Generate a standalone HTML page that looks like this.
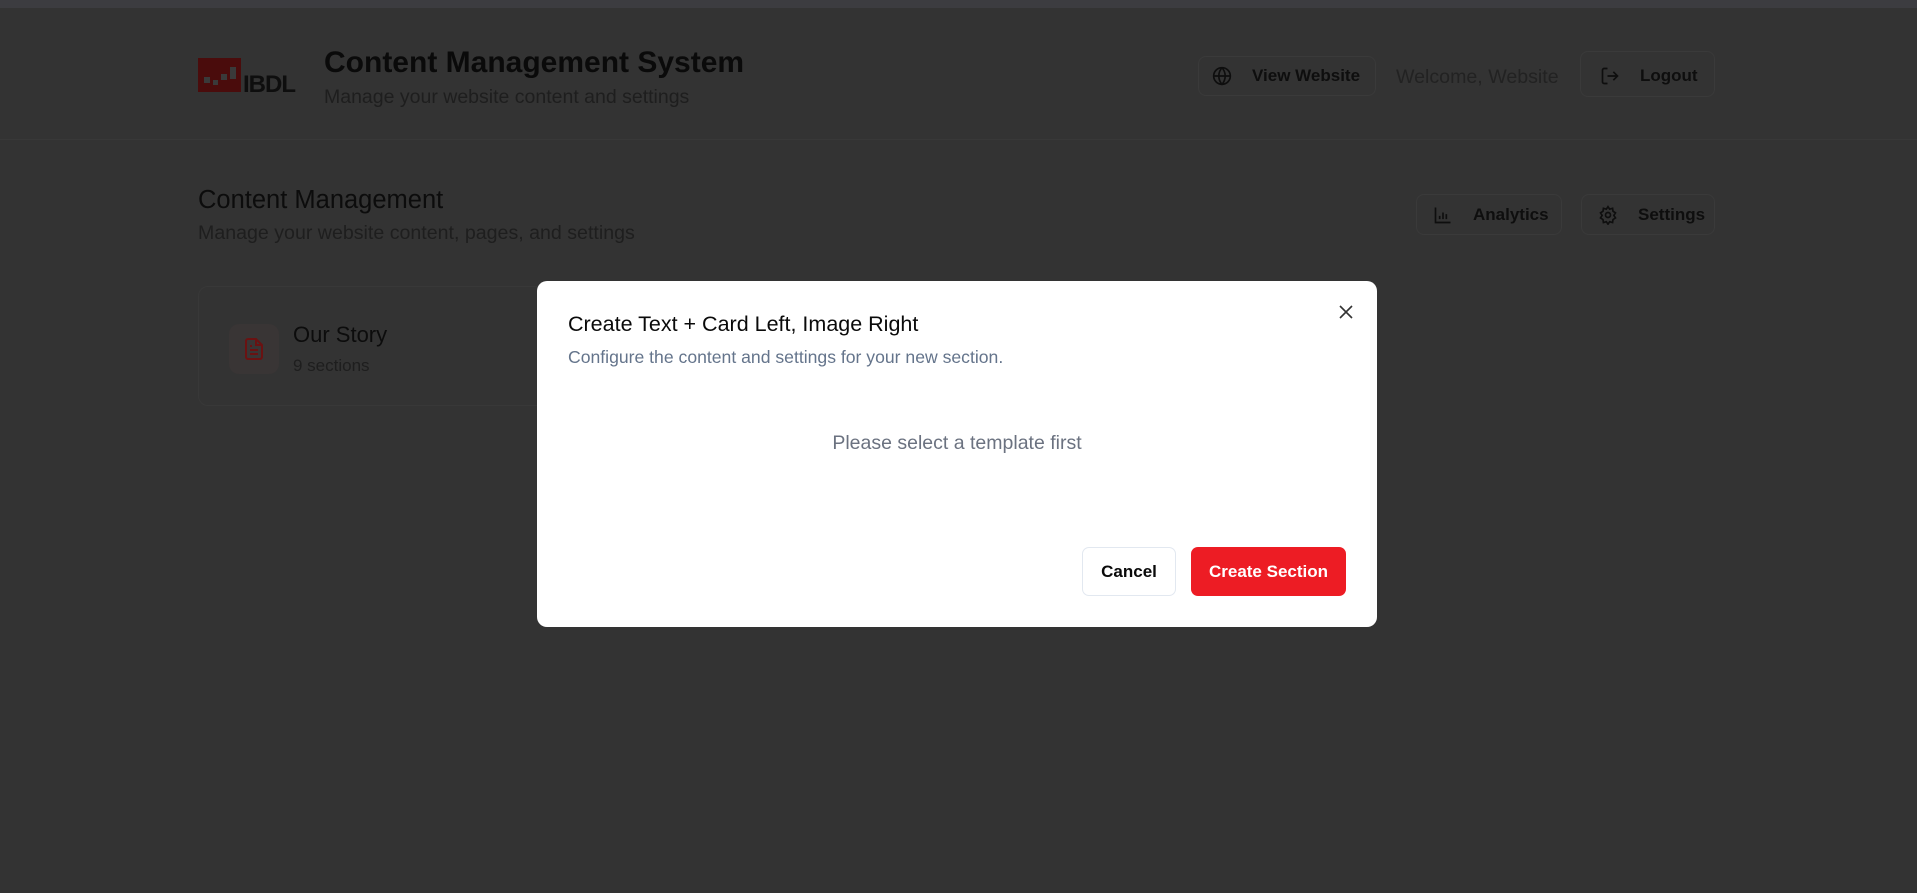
<!DOCTYPE html>
<html><head><meta charset="utf-8"><style>
*{box-sizing:border-box;margin:0;padding:0}
body{width:1917px;height:893px;background:#333333;font-family:"Liberation Sans",sans-serif;position:relative;overflow:hidden;color:#0c0c0c}
.a{position:absolute}
.btn{position:absolute;border:1px solid #3a3a3a;border-radius:8px;display:flex;align-items:center;font-weight:bold;font-size:17px;color:#0e0e0e}
.btn svg{margin-right:20px}
</style></head><body>
<div class="a" style="left:0;top:0;width:1917px;height:8px;background:#3c3c40"></div>
<div class="a" style="left:0;top:139px;width:1917px;height:1px;background:#383838"></div>
<!-- logo -->
<div class="a" style="left:198px;top:58px;width:43px;height:34px;background:#4a0c0c"></div>
<div class="a" style="left:204px;top:77px;width:6px;height:6px;background:#3a3a3a"></div>
<div class="a" style="left:213px;top:80px;width:5px;height:5px;background:#3a3a3a"></div>
<div class="a" style="left:221px;top:74px;width:6px;height:6px;background:#3a3a3a"></div>
<div class="a" style="left:230px;top:67px;width:6px;height:12px;background:#3a3a3a"></div>
<div class="a" style="left:243px;top:71px;font-size:24px;font-weight:bold;color:#0e0e0e;letter-spacing:-1px">IBDL</div>
<div class="a" style="left:324px;top:46px;font-size:30px;font-weight:bold;color:#0a0a0a">Content Management System</div>
<div class="a" style="left:324px;top:86px;font-size:19.5px;color:#1e1e1e">Manage your website content and settings</div>
<div class="btn" style="left:1198px;top:56px;width:178px;height:40px;padding-left:13px">
<svg width="20" height="20" viewBox="0 0 24 24" fill="none" stroke="#0e0e0e" stroke-width="2"><circle cx="12" cy="12" r="10"/><path d="M2 12h20M12 2a15 15 0 0 1 0 20a15 15 0 0 1 0-20"/></svg>View Website</div>
<div class="a" style="left:1396px;top:66px;font-size:19.6px;color:#222">Welcome, Website</div>
<div class="btn" style="left:1580px;top:51px;width:135px;height:46px;padding-left:19px;padding-top:3px">
<svg width="20" height="20" viewBox="0 0 24 24" fill="none" stroke="#0e0e0e" stroke-width="2"><path d="M9 21H5a2 2 0 0 1-2-2V5a2 2 0 0 1 2-2h4M16 17l5-5-5-5M21 12H9"/></svg>Logout</div>
<div class="a" style="left:198px;top:186px;font-size:25.5px;color:#0c0c0c">Content Management</div>
<div class="a" style="left:198px;top:222px;font-size:19.6px;color:#1e1e1e">Manage your website content, pages, and settings</div>
<div class="btn" style="left:1416px;top:194px;width:146px;height:41px;padding-left:16px">
<svg width="20" height="20" viewBox="0 0 24 24" fill="none" stroke="#0e0e0e" stroke-width="2"><path d="M3 3v18h18M8 17v-4M12 17v-8M16 17v-6"/></svg>Analytics</div>
<div class="btn" style="left:1581px;top:194px;width:134px;height:41px;padding-left:16px">
<svg width="20" height="20" viewBox="0 0 24 24" fill="none" stroke="#0e0e0e" stroke-width="2"><circle cx="12" cy="12" r="3"/><path d="M12 2l2 3 3.5-1 .5 3.5 3 2-2 3 2 3-3 2-.5 3.5-3.5-1-2 3-2-3-3.5 1-.5-3.5-3-2 2-3-2-3 3-2 .5-3.5 3.5 1z"/></svg>Settings</div>
<!-- card -->
<div class="a" style="left:198px;top:286px;width:486px;height:120px;border:1px solid #383838;border-radius:10px"></div>
<div class="a" style="left:229px;top:324px;width:50px;height:50px;border-radius:10px;background:#393535"></div>
<svg class="a" style="left:242px;top:336px" width="24" height="26" viewBox="0 0 24 24" fill="none" stroke="#6a1212" stroke-width="2"><path d="M14 2H6a2 2 0 0 0-2 2v16a2 2 0 0 0 2 2h12a2 2 0 0 0 2-2V8z"/><path d="M14 2v6h6M8 13h8M8 17h8M8 9h2"/></svg>
<div class="a" style="left:293px;top:322px;font-size:22px;color:#0c0c0c">Our Story</div>
<div class="a" style="left:293px;top:356px;font-size:17px;color:#1e1e1e">9 sections</div>
<!-- modal -->
<div class="a" style="left:537px;top:281px;width:840px;height:346px;background:#fff;border-radius:10px"></div>
<div class="a" style="left:568px;top:312px;font-size:21.5px;color:#0a0a0a">Create Text + Card Left, Image Right</div>
<div class="a" style="left:568px;top:347px;font-size:17.6px;color:#64748b">Configure the content and settings for your new section.</div>
<svg class="a" style="left:1338px;top:304px" width="16" height="16" viewBox="0 0 16 16" stroke="#333" stroke-width="1.6"><path d="M2 2l12 12M14 2L2 14"/></svg>
<div class="a" style="left:537px;width:840px;top:432px;text-align:center;font-size:19.5px;color:#6b7280">Please select a template first</div>
<div class="a" style="left:1082px;top:547px;width:94px;height:49px;border:1px solid #e2e8f0;border-radius:7px;display:flex;align-items:center;justify-content:center;font-size:17px;font-weight:bold;color:#0a0a0a">Cancel</div>
<div class="a" style="left:1191px;top:547px;width:155px;height:49px;background:#ed1c24;border-radius:7px;display:flex;align-items:center;justify-content:center;font-size:17px;font-weight:bold;color:#fff">Create Section</div>
</body></html>
